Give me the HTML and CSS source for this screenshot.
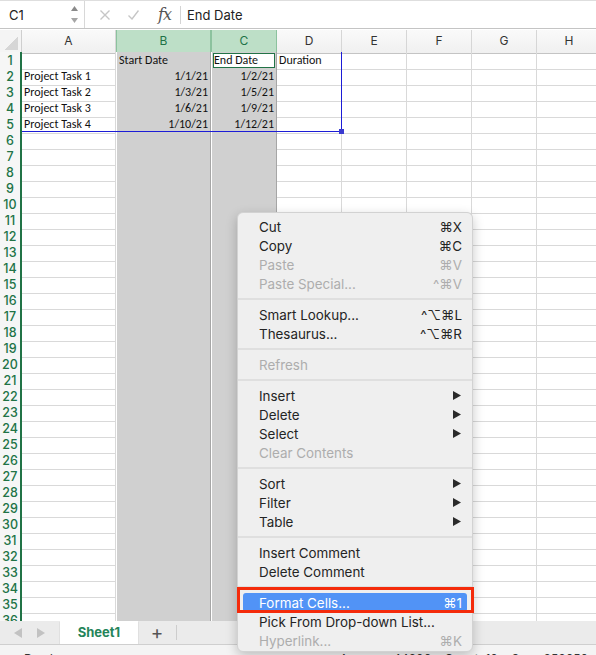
FILE: index.html
```html
<!DOCTYPE html>
<html lang="en">
    <head>
        <meta charset="UTF-8" />
        <meta name="viewport" content="width=device-width, initial-scale=1.0" />
        <title>Book1 - Format Cells</title>
        <link rel="stylesheet" href="styles.css">
    </head>
    <body>
        <div class="app">
            <!-- Barre de formule -->
            <div class="formula-bar">
                <div class="name-box">
                    <span>C1</span>
                    <svg class="stepper" width="7" height="18" viewBox="0 0 7 18">
                        <path d="M3.5 0 L7 5 L0 5 Z" fill="#8a8a8a" />
                        <path d="M0 12 L7 12 L3.5 17 Z" fill="#a6a6a6" />
                    </svg>
                </div>
                <div class="fx-tools">
                    <svg class="tool" width="10" height="10" viewBox="0 0 10 10">
                        <path d="M0.5 0.5 L9.5 9.5 M9.5 0.5 L0.5 9.5" stroke="#c6c6c6" stroke-width="1.4" fill="none" />
                    </svg>
                    <svg class="tool check" width="11" height="10" viewBox="0 0 11 10">
                        <path d="M0.5 5.5 L4 9 L10.5 0.5" stroke="#c6c6c6" stroke-width="1.4" fill="none" />
                    </svg>
                    <span class="fx">fx</span>
                </div>
                <div class="fx-sep"></div>
                <div class="formula">End Date</div>
            </div>

            <!-- Feuille -->
            <div class="sheet">
                <div class="row head">
                    <div class="corner"></div>
                    <div class="col">A</div>
                    <div class="col sel">B</div>
                    <div class="col sel">C</div>
                    <div class="col">D</div>
                    <div class="col">E</div>
                    <div class="col">F</div>
                    <div class="col">G</div>
                    <div class="col">H</div>
                </div>
                <div class="rows" id="rows">
                    <div class="row">
                        <div class="rh">1</div>
                        <div class="c"></div>
                        <div class="c s">Start Date</div>
                        <div class="c s active">End Date</div>
                        <div class="c">Duration</div>
                        <div class="c"></div><div class="c"></div><div class="c"></div><div class="c"></div>
                    </div>
                    <div class="row">
                        <div class="rh">2</div>
                        <div class="c">Project Task 1</div>
                        <div class="c s num">1/1/21</div>
                        <div class="c s num">1/2/21</div>
                        <div class="c"></div>
                        <div class="c"></div><div class="c"></div><div class="c"></div><div class="c"></div>
                    </div>
                    <div class="row">
                        <div class="rh">3</div>
                        <div class="c">Project Task 2</div>
                        <div class="c s num">1/3/21</div>
                        <div class="c s num">1/5/21</div>
                        <div class="c"></div>
                        <div class="c"></div><div class="c"></div><div class="c"></div><div class="c"></div>
                    </div>
                    <div class="row">
                        <div class="rh">4</div>
                        <div class="c">Project Task 3</div>
                        <div class="c s num">1/6/21</div>
                        <div class="c s num">1/9/21</div>
                        <div class="c"></div>
                        <div class="c"></div><div class="c"></div><div class="c"></div><div class="c"></div>
                    </div>
                    <div class="row">
                        <div class="rh">5</div>
                        <div class="c">Project Task 4</div>
                        <div class="c s num">1/10/21</div>
                        <div class="c s num">1/12/21</div>
                        <div class="c"></div>
                        <div class="c"></div><div class="c"></div><div class="c"></div><div class="c"></div>
                    </div>
                    <!-- Plage en bleu A1:D5 -->
                    <div class="range"><span class="handle"></span></div>
                </div>
            </div>

            <!-- Onglets -->
            <div class="tabs">
                <div class="nav">
                    <svg width="8" height="10" viewBox="0 0 8 10"><path d="M8 0 L8 10 L0 5 Z" fill="#c2c2c2" /></svg>
                    <svg width="8" height="10" viewBox="0 0 8 10"><path d="M0 0 L8 5 L0 10 Z" fill="#c2c2c2" /></svg>
                </div>
                <div class="tab">Sheet1</div>
                <div class="add">+</div>
                <div class="tab-sep"></div>
            </div>

            <!-- Barre d'état -->
            <div class="status">
                <span>Ready</span>
                <span>Average: 44206&nbsp;&nbsp;&nbsp;&nbsp;Count: 10&nbsp;&nbsp;&nbsp;&nbsp;Sum: 353650</span>
            </div>

            <!-- Menu contextuel -->
            <div class="menu">
                <div class="item"><span>Cut</span><span class="key">⌘X</span></div>
                <div class="item"><span>Copy</span><span class="key">⌘C</span></div>
                <div class="item off"><span>Paste</span><span class="key">⌘V</span></div>
                <div class="item off"><span>Paste Special...</span><span class="key">^⌘V</span></div>
                <div class="sep"></div>
                <div class="item"><span>Smart Lookup...</span><span class="key">^⌥⌘L</span></div>
                <div class="item"><span>Thesaurus...</span><span class="key">^⌥⌘R</span></div>
                <div class="sep"></div>
                <div class="item off"><span>Refresh</span></div>
                <div class="sep"></div>
                <div class="item"><span>Insert</span><svg class="sub" width="8" height="9" viewBox="0 0 8 9"><path d="M0 0 L8 4.5 L0 9 Z" /></svg></div>
                <div class="item"><span>Delete</span><svg class="sub" width="8" height="9" viewBox="0 0 8 9"><path d="M0 0 L8 4.5 L0 9 Z" /></svg></div>
                <div class="item"><span>Select</span><svg class="sub" width="8" height="9" viewBox="0 0 8 9"><path d="M0 0 L8 4.5 L0 9 Z" /></svg></div>
                <div class="item off"><span>Clear Contents</span></div>
                <div class="sep"></div>
                <div class="item"><span>Sort</span><svg class="sub" width="8" height="9" viewBox="0 0 8 9"><path d="M0 0 L8 4.5 L0 9 Z" /></svg></div>
                <div class="item"><span>Filter</span><svg class="sub" width="8" height="9" viewBox="0 0 8 9"><path d="M0 0 L8 4.5 L0 9 Z" /></svg></div>
                <div class="item"><span>Table</span><svg class="sub" width="8" height="9" viewBox="0 0 8 9"><path d="M0 0 L8 4.5 L0 9 Z" /></svg></div>
                <div class="sep"></div>
                <div class="item"><span>Insert Comment</span></div>
                <div class="item"><span>Delete Comment</span></div>
                <div class="sep"></div>
                <div class="item hl"><span>Format Cells...</span><span class="key">⌘1</span></div>
                <div class="item"><span>Pick From Drop-down List...</span></div>
                <div class="item off"><span>Hyperlink...</span><span class="key">⌘K</span></div>
            </div>

            <!-- Cadre rouge d'annotation -->
            <div class="callout"></div>
        </div>

        <script>
            // Lignes vides 6 à 36
            const ROWS = document.querySelector("#rows");
            for (let i = 6; i <= 36; i++) {
                const row = document.createElement("div");
                row.className = "row";
                row.innerHTML = `<div class="rh">${i}</div><div class="c"></div><div class="c s"></div><div class="c s"></div>`
                    + `<div class="c"></div>`.repeat(5);
                ROWS.appendChild(row);
            }
        </script>
    </body>
</html>
```

FILE: styles.css
```css
* {
    margin: 0;
    padding: 0;
    box-sizing: border-box;
}

html,
body {
    overflow: hidden;
    background: #fff;
}

body {
    font-family: Inter, "Liberation Sans", sans-serif;
    color: #222;
}

.app {
    position: relative;
    width: 596px;
    height: 655px;
    display: flex;
    flex-direction: column;
    overflow: hidden;
}

/* Barre de formule */
.formula-bar {
    flex: none;
    display: flex;
    align-items: center;
    height: 29px;
    margin-bottom: 1px;
    border-top: 1px solid #dedede;
    border-bottom: 1px solid #c4c4c4;
    font-size: 13px;
}

.name-box {
    display: flex;
    align-items: center;
    justify-content: space-between;
    width: 85px;
    height: 100%;
    padding: 0 6px 0 9px;
    border-right: 1px solid #d8d8d8;
}

.fx-tools {
    display: flex;
    align-items: center;
    width: 95px;
    padding-left: 15px;
}

.fx-tools .check {
    margin-left: 18px;
}

.fx-tools .fx {
    margin-left: 19px;
    font-family: "DejaVu Serif", "Liberation Serif", serif;
    font-style: italic;
    font-size: 16px;
    color: #555;
    letter-spacing: -1px;
}

.fx-sep {
    width: 1px;
    height: 18px;
    background: #d4d4d4;
}

.formula {
    padding-left: 6px;
}

/* Feuille */
.sheet {
    flex: none;
    overflow: hidden;
}

.row {
    display: grid;
    grid-template-columns: 22px 94px 95px 66px 65px 65px 65px 65px 65px;
    height: 16px;
}

.row.head {
    height: 22px;
}

.corner {
    border-right: 1px solid #cfcfcf;
    border-bottom: 1px solid #c4c4c4;
    background: #f4f4f4 linear-gradient(to bottom right, transparent 50%, #d6d6d6 50%) no-repeat right 3px bottom 3px / 13px 14px;
}

.col {
    border-right: 1px solid #d6d6d6;
    border-bottom: 1px solid #c4c4c4;
    background: linear-gradient(#fafafa, #f0f0f0);
    font-size: 12px;
    line-height: 22px;
    text-align: center;
    color: #333;
}

.col.sel {
    background: #bddfc7;
    color: #217346;
    border-left: 1px solid #8cc29e;
    border-right: 1px solid #8cc29e;
    border-bottom: 2px solid #217346;
}

.rows {
    position: relative;
    height: 569px;
    overflow: hidden;
}

.rh {
    border-right: 2px solid #217346;
    border-bottom: 1px solid #d8d8d8;
    background: #f6f6f6;
    font-size: 12.5px;
    font-weight: 500;
    line-height: 17px;
    text-align: center;
    color: #217346;
}

.c {
    border-right: 1px solid #d9d9d9;
    border-bottom: 1px solid #d9d9d9;
    padding: 1px 2px 0;
    font-family: Carlito, Lato, sans-serif;
    font-size: 12px;
    line-height: 15px;
    white-space: nowrap;
    color: #111;
}

.c.s {
    background: #d0d0d0;
    border-left: 1px solid #fff;
    border-right-color: #a6a6a6;
    border-bottom-color: #b4b4b4;
}

.c.num {
    text-align: right;
}

.c.active {
    background: #fff;
    box-shadow: inset 0 0 0 1px #d0d0d0, inset 0 0 0 2px #217346;
}

.range {
    position: absolute;
    left: 22px;
    top: 0;
    width: 320px;
    height: 80px;
    border-right: 1px solid #1c1cd6;
    border-bottom: 1px solid #1c1cd6;
}

.range .handle {
    position: absolute;
    right: -3px;
    bottom: -3px;
    width: 5px;
    height: 5px;
    background: #3a3ad0;
}

/* Onglets */
.tabs {
    flex: none;
    display: flex;
    align-items: center;
    height: 23px;
    background: #ebebeb;
}

.nav {
    display: flex;
    align-items: center;
    gap: 15px;
    width: 60px;
    padding-left: 14px;
}

.tab {
    align-self: stretch;
    width: 78px;
    background: #fff;
    box-shadow: 0 1px 1px rgba(0, 0, 0, .25);
    font-size: 13px;
    font-weight: 700;
    line-height: 22px;
    text-align: center;
    color: #25855a;
}

.add {
    width: 38px;
    font-size: 19px;
    line-height: 22px;
    text-align: center;
    color: #555;
}

.tab-sep {
    width: 1px;
    height: 15px;
    background: #cdcdcd;
}

/* Barre d'état */
.status {
    flex: none;
    display: flex;
    justify-content: space-between;
    height: 24px;
    padding: 6px 8px 0 24px;
    border-top: 1px solid #cfcfcf;
    background: #f4f4f4;
    font-size: 12px;
    color: #333;
}

/* Menu contextuel */
.menu {
    position: absolute;
    left: 237px;
    top: 212px;
    width: 236px;
    padding: 4px 0 1px;
    border: 1px solid #d2d2d2;
    border-radius: 6px;
    background: #efefef;
    box-shadow: 0 4px 12px rgba(0, 0, 0, .22);
    font-size: 13.4px;
    color: #242424;
}

.item {
    display: flex;
    align-items: center;
    justify-content: space-between;
    height: 19px;
    padding: 0 10px 0 21px;
    white-space: nowrap;
}

.item.off {
    color: #adadad;
}

.item .key {
    font-family: Inter, "DejaVu Sans", sans-serif;
}

.item .sub {
    margin-right: 1px;
    fill: #2a2a2a;
}

.item.hl {
    margin: 0 5px;
    padding: 0 5px 0 16px;
    border-radius: 3px;
    background: #5193f6;
    color: #fff;
}

.sep {
    height: 2px;
    margin: 5px 0;
    background: #dfdfdf;
}

.callout {
    position: absolute;
    left: 237px;
    top: 587px;
    width: 237px;
    height: 26px;
    border: 3px solid #f42b0b;
}
```
